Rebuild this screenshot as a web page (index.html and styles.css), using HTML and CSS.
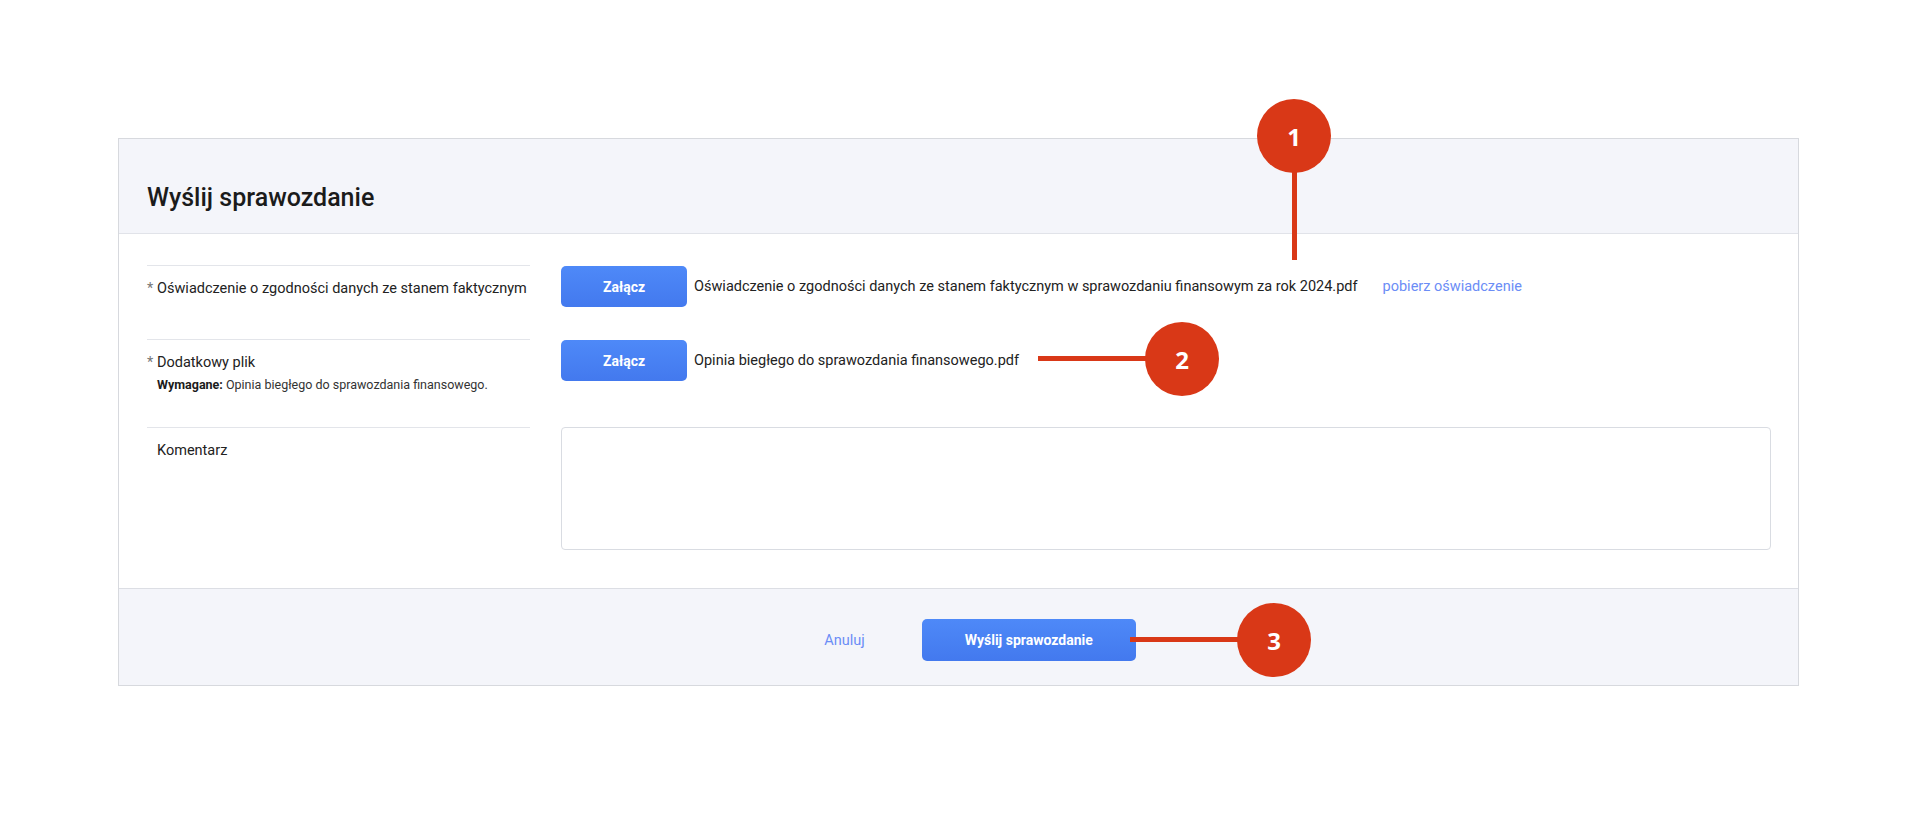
FILE: index.html
```html
<!DOCTYPE html>
<html lang="pl">
<head>
  <meta charset="UTF-8" />
  <meta name="viewport" content="width=device-width, initial-scale=1.0" />
  <title>Wyślij sprawozdanie</title>
  <link rel="stylesheet" href="styles.css">
</head>
<body>
  <div class="page">
    <div class="card">
      <div class="card-header">
        <h1>Wyślij sprawozdanie</h1>
      </div>

      <div class="card-body">
        <div class="row">
          <div class="label">
            <span class="name"><span class="req">*</span>Oświadczenie o zgodności danych ze stanem faktycznym</span>
          </div>
          <div class="control">
            <button class="btn">Załącz</button>
            <span class="file">Oświadczenie o zgodności danych ze stanem faktycznym w sprawozdaniu finansowym za rok 2024.pdf</span>
            <a class="link" href="#">pobierz oświadczenie</a>
          </div>
        </div>

        <div class="row">
          <div class="label">
            <span class="name"><span class="req">*</span>Dodatkowy plik</span>
            <p class="hint"><b>Wymagane:</b> Opinia biegłego do sprawozdania finansowego.</p>
          </div>
          <div class="control">
            <button class="btn">Załącz</button>
            <span class="file">Opinia biegłego do sprawozdania finansowego.pdf</span>
          </div>
        </div>

        <div class="row last">
          <div class="label">
            <span class="name">Komentarz</span>
          </div>
          <div class="control">
            <textarea class="comment"></textarea>
          </div>
        </div>
      </div>

      <div class="card-footer">
        <a class="link cancel" href="#">Anuluj</a>
        <button class="btn btn-wide">Wyślij sprawozdanie</button>
      </div>
    </div>

    <!-- markers -->
    <div class="line line-1"></div>
    <div class="marker marker-1">1</div>
    <div class="line line-2"></div>
    <div class="marker marker-2">2</div>
    <div class="line line-3"></div>
    <div class="marker marker-3">3</div>
  </div>
</body>
</html>
```

FILE: styles.css
```css
body {
  margin: 0;
  background: #fff;
  color: #222;
  font-family: Roboto, "Liberation Sans", sans-serif;
}
.page {
  position: relative;
  padding: 138px 0 0 118px;
  height: 685px;
}
.card {
  width: 1681px;
  box-sizing: border-box;
  border: 1px solid #d7d9de;
}
.card-header {
  background: #f4f5fa;
  border-bottom: 1px solid #e1e3e9;
  padding: 44px 28px 20px;
}
.card-header h1 {
  margin: 0;
  font-size: 25px;
  line-height: 30px;
  font-weight: 500;
  color: #1b1b1b;
}
.card-body {
  padding: 31px 27px 38px 28px;
}
.row {
  display: grid;
  grid-template-columns: 383px 1fr;
  column-gap: 31px;
}
.label {
  border-top: 1px solid #e3e5ea;
  padding: 14px 0 34px 10px;
}
.name {
  display: block;
  font-size: 14.5px;
  line-height: 18px;
  white-space: nowrap;
}
.req {
  display: inline-block;
  width: 10px;
  margin-left: -10px;
  color: #777;
}
.hint {
  margin: 5px 0 0;
  font-size: 12.5px;
  line-height: 16px;
  color: #333;
}
.hint b {
  color: #1b1b1b;
}
.control {
  display: flex;
  align-items: center;
  align-self: start;
  padding: 1px 0 32px;
  font-size: 14.5px;
}
.last .control {
  padding: 0;
}
.btn {
  height: 41px;
  width: 126px;
  border: none;
  border-radius: 5px;
  background: linear-gradient(#4e89f8, #4379ee);
  color: #fff;
  font-family: inherit;
  font-size: 14px;
  font-weight: 700;
  cursor: pointer;
}
.file {
  margin-left: 7px;
  color: #222;
}
.link {
  color: #6b8df6;
  text-decoration: none;
  font-size: 14.5px;
}
.control .link {
  margin-left: 25px;
}
.comment {
  width: 100%;
  height: 123px;
  box-sizing: border-box;
  border: 1px solid #d9dce2;
  border-radius: 4px;
  resize: none;
}
.card-footer {
  background: #f4f5fa;
  border-top: 1px solid #dcdee4;
  display: flex;
  align-items: center;
  justify-content: center;
  gap: 57px;
  padding: 30px 0 24px 43px;
}
.btn-wide {
  width: 214px;
  height: 42px;
}

.marker {
  position: absolute;
  width: 74px;
  height: 74px;
  border-radius: 50%;
  background: #d93817;
  color: #fff;
  font-family: "Open Sans", sans-serif;
  font-weight: 700;
  font-size: 24px;
  display: flex;
  align-items: center;
  justify-content: center;
}
.line {
  position: absolute;
  background: #d93817;
}
.marker-1 { left: 1257px; top: 99px; }
.line-1 { left: 1292px; top: 137px; width: 5px; height: 123px; }
.marker-2 { left: 1145px; top: 322px; }
.line-2 { left: 1038px; top: 356px; width: 144px; height: 5px; }
.marker-3 { left: 1237px; top: 603px; }
.line-3 { left: 1130px; top: 637px; width: 144px; height: 5px; }
```
